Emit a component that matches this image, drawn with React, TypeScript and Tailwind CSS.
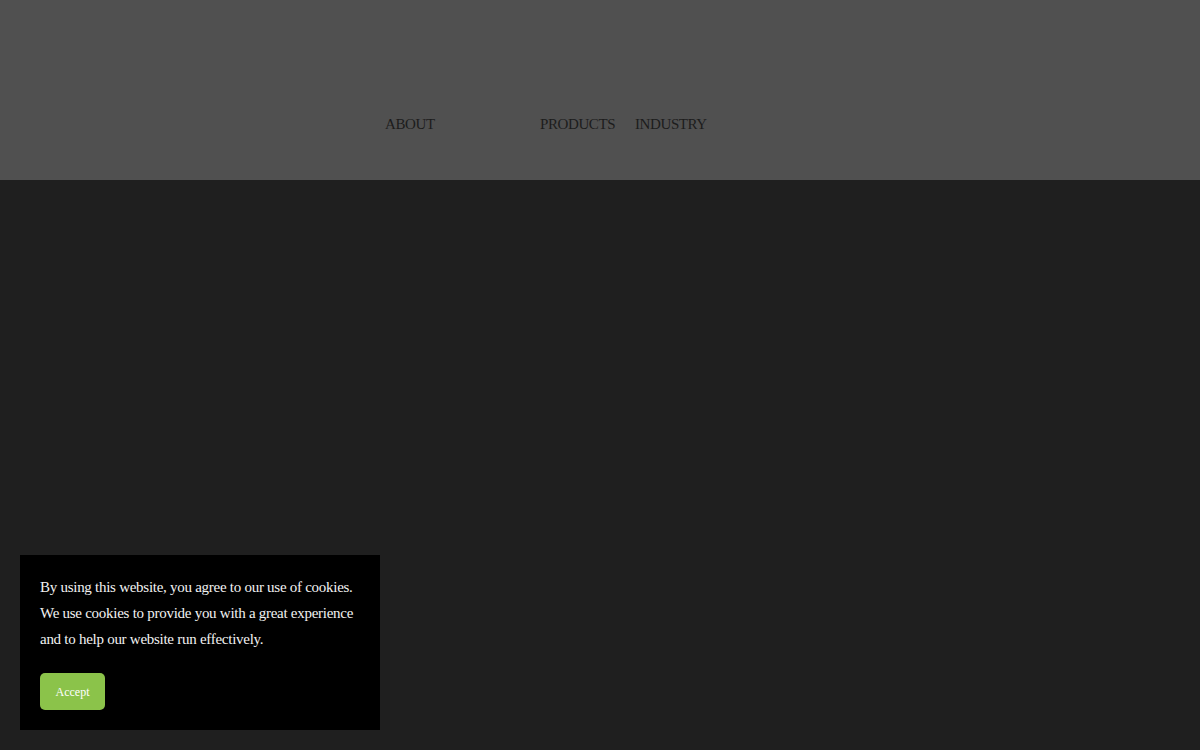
export default function App() {
  return (
    <div className="relative min-h-[750px] w-full bg-[#1f1f1f] font-['Liberation_Serif',serif]">
      <header className="flex h-[180px] items-start bg-[#505050] pt-[114px]">
        <nav className="flex items-center pl-[385px] text-[15px] leading-[20px] tracking-[-0.4px] text-[#1c1c1c]">
          <a className="w-[155px] uppercase">About</a>
          <a className="w-[95px] uppercase">Products</a>
          <a className="uppercase">Industry</a>
        </nav>
      </header>

      <div className="absolute left-[20px] top-[555px] w-[360px] bg-black px-[20px] pb-[20px] pt-[19px]">
        <p className="whitespace-nowrap text-[15px] leading-[26px] tracking-[-0.27px] text-[#f2f2f2]">
          By using this website, you agree to our use of cookies.
          <br />
          We use cookies to provide you with a great experience
          <br />
          and to help our website run effectively.
        </p>
        <button className="mt-[21px] h-[37px] w-[65px] rounded-[5px] bg-[#8bc34a] text-[12px] text-white">
          Accept
        </button>
      </div>
    </div>
  );
}
